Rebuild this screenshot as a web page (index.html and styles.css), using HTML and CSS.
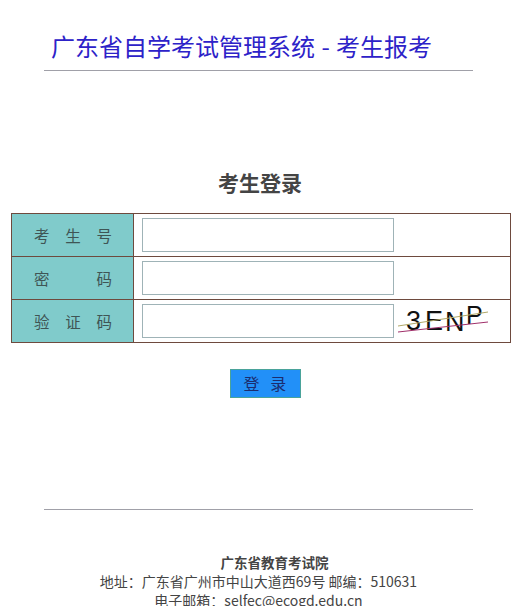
FILE: index.html
```html
<!DOCTYPE html>
<html lang="zh-CN">
<head>
<meta charset="utf-8">
<title>广东省自学考试管理系统 - 考生报考</title>
<link rel="stylesheet" href="styles.css">
</head>
<body>
<header class="top">
  <h1 class="site-title">广东省自学考试管理系统 - 考生报考</h1>
</header>
<main class="login">
  <h2 class="login-title">考生登录</h2>
  <table class="login-table">
    <tr>
      <th class="label"><div class="jl"><span>考</span><span>生</span><span>号</span></div></th>
      <td class="field"><input class="inp" type="text"></td>
    </tr>
    <tr>
      <th class="label"><div class="jl"><span>密</span><span>码</span></div></th>
      <td class="field"><input class="inp" type="password"></td>
    </tr>
    <tr>
      <th class="label"><div class="jl"><span>验</span><span>证</span><span>码</span></div></th>
      <td class="field">
        <div class="code-row">
          <input class="inp" type="text">
          <svg class="captcha" width="94" height="36" viewBox="0 0 94 36">
            <text x="8" y="30" font-family="Liberation Sans, sans-serif" font-size="27" fill="#111">3</text>
            <text x="27" y="30" font-family="Liberation Sans, sans-serif" font-size="27" fill="#111">E</text>
            <text x="47" y="31" font-family="Liberation Sans, sans-serif" font-size="27" fill="#111">N</text>
            <text x="68" y="24" font-family="Liberation Sans, sans-serif" font-size="25" fill="#111">P</text>
            <line x1="0" y1="26" x2="90" y2="12" stroke="#b0a868" stroke-width="1"/>
            <line x1="0" y1="32" x2="90" y2="22" stroke="#a0306a" stroke-width="1"/>
          </svg>
        </div>
      </td>
    </tr>
  </table>
  <div class="btn-row"><button class="btn" type="button">登&nbsp;&nbsp;&nbsp;录</button></div>
</main>
<footer class="foot">
  <p class="org">广东省教育考试院</p>
  <p class="addr">地址：广东省广州市中山大道西69号 邮编：510631</p>
  <p class="addr">电子邮箱：selfec@ecogd.edu.cn</p>
</footer>
</body>
</html>
```
FILE: styles.css
```css
html, body {
  margin: 0;
  padding: 0;
  background: #fff;
}
body {
  font-family: "Noto Sans CJK SC", "Noto Sans", sans-serif;
  color: #333;
  width: 527px;
}
.top {
  margin: 0 0 0 44px;
  width: 429px;
  border-bottom: 1px solid #a0a0a8;
  padding-top: 29px;
  height: 41px;
}
.site-title {
  margin: 0 0 0 7px;
  font-size: 24px;
  font-weight: normal;
  line-height: 34px;
  color: #2d22c8;
  word-spacing: 1px;
  white-space: nowrap;
}
.login {
  padding-top: 96px;
}
.login-title {
  margin: 0;
  text-align: center;
  font-size: 21px;
  line-height: 30px;
  font-weight: bold;
  color: #444;
  width: 520px;
}
.login-table {
  margin: 16px 0 0 11px;
  width: 500px;
  border-collapse: collapse;
  border: 1px solid #6e4a3e;
}
.login-table tr {
  height: 43px;
}
.label {
  width: 122px;
  box-sizing: border-box;
  background: #80cbcb;
  border: 1px solid #6e4a3e;
  padding: 0 21px 0 22px;
  font-weight: normal;
  font-size: 15.5px;
  color: #3f5555;
  vertical-align: middle;
}
.jl {
  display: flex;
  justify-content: space-between;
}
.field {
  border: 1px solid #6e4a3e;
  padding: 0 0 0 8px;
  vertical-align: middle;
}
.code-row {
  display: flex;
  align-items: center;
  gap: 4px;
}
.inp {
  display: block;
  box-sizing: border-box;
  width: 252px;
  height: 34px;
  margin: 0;
  border: 1px solid #9fb3b7;
  background: #fff;
  padding: 0 4px;
  outline: none;
}
.captcha {
  display: block;
  margin-top: -6px;
}
.btn-row {
  display: flex;
  justify-content: center;
  padding: 26px 0 0 5px;
  width: 520px;
}
.btn {
  width: 71px;
  height: 29px;
  margin: 0;
  padding: 0;
  background: #2290f8;
  border: 1px solid #4aa39a;
  color: #1b2c6e;
  font-family: "Noto Sans CJK SC", sans-serif;
  font-size: 16px;
  line-height: 27px;
}
.foot {
  margin: 111px 0 0 44px;
  width: 429px;
  border-top: 1px solid #a0a0a8;
  padding-top: 43px;
  text-align: center;
  font-size: 14px;
  line-height: 19px;
  color: #444;
}
.foot p {
  margin: 0;
  white-space: nowrap;
}
.org {
  font-weight: bold;
  padding-left: 32px;
  font-size: 13.5px;
}
```
